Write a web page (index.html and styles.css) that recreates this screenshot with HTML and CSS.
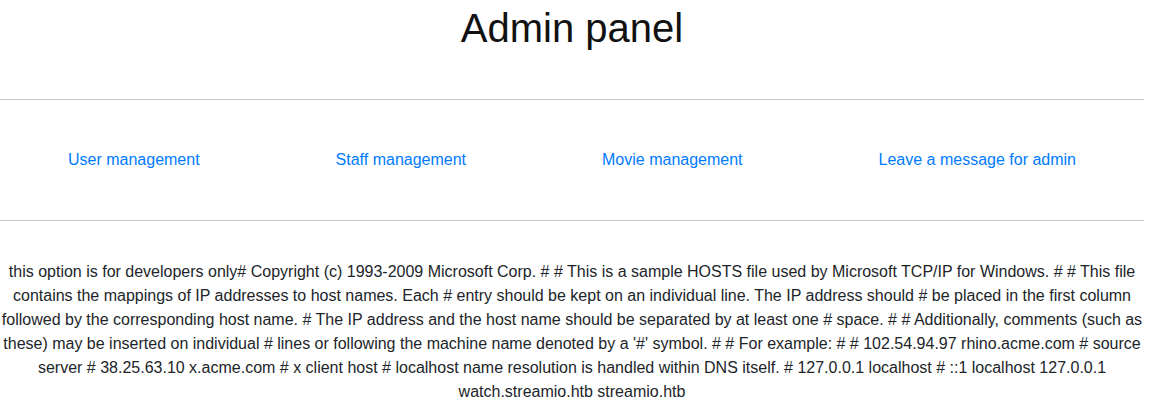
FILE: index.html
```html
<!DOCTYPE html>
<html lang="en">
<head>
<meta charset="utf-8">
<title>Admin panel</title>
<link rel="stylesheet" href="styles.css">
</head>
<body>
<div class="page">
  <h1 class="title">Admin panel</h1>
  <hr class="rule rule-top">
  <nav class="menu">
    <a class="menu-link" href="#">User management</a>
    <a class="menu-link" href="#">Staff management</a>
    <a class="menu-link" href="#">Movie management</a>
    <a class="menu-link" href="#">Leave a message for admin</a>
  </nav>
  <hr class="rule">
  <p class="dump">this option is for developers only# Copyright (c) 1993-2009 Microsoft Corp. # # This is a sample HOSTS file used by Microsoft TCP/IP for Windows. # # This file contains the mappings of IP addresses to host names. Each # entry should be kept on an individual line. The IP address should # be placed in the first column followed by the corresponding host name. # The IP address and the host name should be separated by at least one # space. # # Additionally, comments (such as these) may be inserted on individual # lines or following the machine name denoted by a '#' symbol. # # For example: # # 102.54.94.97 rhino.acme.com # source server # 38.25.63.10 x.acme.com # x client host # localhost name resolution is handled within DNS itself. # 127.0.0.1 localhost # ::1 localhost 127.0.0.1 watch.streamio.htb streamio.htb</p>
</div>
</body>
</html>
```

FILE: styles.css
```css
html, body {
  margin: 0;
  padding: 0;
  background: #fff;
}
body {
  font-family: "Liberation Sans", Arial, sans-serif;
  font-size: 16px;
  line-height: 1.5;
  color: #212529;
}
.page {
  width: 1144px;
  display: flex;
  flex-direction: column;
}
.title {
  margin: 4px 0 0;
  font-size: 40px;
  font-weight: 500;
  line-height: 1.2;
  text-align: center;
  color: #111;
}
.rule {
  margin: 0;
  border: 0;
  border-top: 1px solid #c8c8c8;
  height: 0;
}
.rule-top {
  margin-top: 47px;
}
.menu {
  height: 120px;
  display: flex;
  justify-content: space-around;
  align-items: center;
}
.menu-link {
  color: #007bff;
  text-decoration: none;
}
.dump {
  margin: 39px 0 0;
  text-align: center;
}
```
